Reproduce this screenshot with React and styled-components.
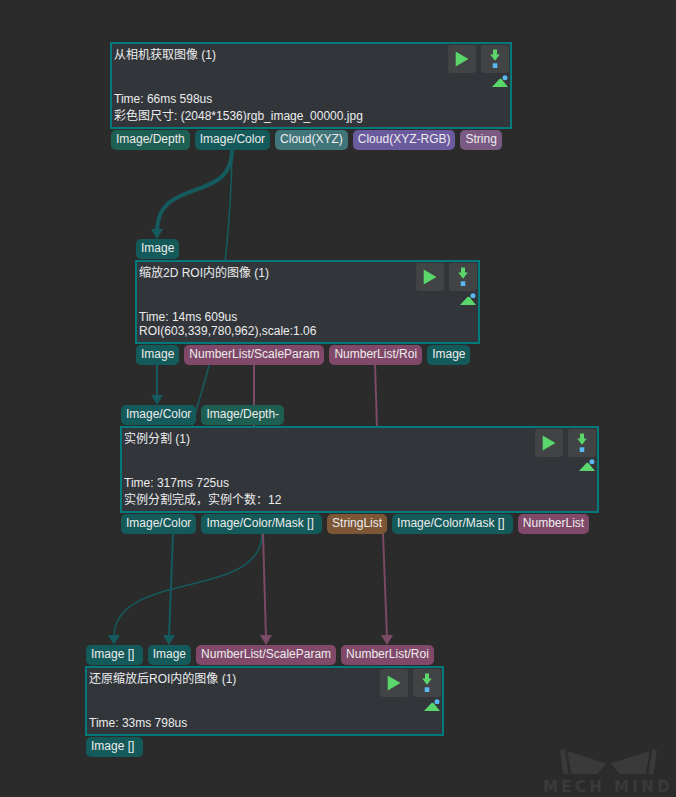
import React from "react";
import styled, { createGlobalStyle } from "styled-components";

const GlobalStyle = createGlobalStyle`
  html, body {
    margin: 0;
    padding: 0;
    background: #2b2b2b;
  }
`;

const portColors = {
  image: "#155a5a",
  depth: "#1d5f52",
  cloud: "#40757a",
  rgb: "#6a5a9e",
  string: "#7a5a82",
  number: "#80496a",
  list: "#7d5636",
};

const Canvas = styled.div`
  position: relative;
  width: 676px;
  height: 797px;
  overflow: hidden;
  background: #2b2b2b;
  font-family: "Liberation Sans", "Noto Sans CJK SC", sans-serif;
  font-size: 12px;
  color: #ececec;
`;

const Edges = styled.svg`
  position: absolute;
  left: 0;
  top: 0;
`;

const NodeWrap = styled.div`
  position: absolute;
  left: ${(p) => p.$x}px;
  top: ${(p) => p.$y}px;
  width: ${(p) => p.$w}px;
  display: flex;
  flex-direction: column;
  gap: 1px;
`;

const PortRow = styled.div`
  display: flex;
  gap: 5px;
  padding-left: 1px;
`;

const Port = styled.div`
  height: 20px;
  line-height: 18px;
  padding: 0 5px;
  border-radius: 5px;
  white-space: pre;
  background: ${(p) => portColors[p.$kind]};
`;

const Box = styled.div`
  box-sizing: border-box;
  height: ${(p) => p.$h}px;
  display: flex;
  justify-content: space-between;
  padding: 1px 1px 4px 2px;
  border: 2px solid #007a7a;
  background: #32363b;
`;

const Info = styled.div`
  display: flex;
  flex-direction: column;
  justify-content: space-between;
  line-height: normal;
  white-space: nowrap;
`;

const Title = styled.div``;

const Status = styled.div``;

const Side = styled.div`
  display: flex;
  flex-direction: column;
  align-items: flex-end;
`;

const Buttons = styled.div`
  display: flex;
  gap: 5px;
`;

const ToolButton = styled.div`
  width: 28px;
  height: 28px;
  border-radius: 3px;
  background: #414345;
`;

const Mini = styled.svg`
  margin-top: 2px;
`;

const Watermark = styled.div`
  position: absolute;
  right: 2px;
  bottom: 4px;
  width: 132px;
  display: flex;
  flex-direction: column;
  align-items: center;
  color: #3a3a3a;
`;

const WatermarkLogo = styled.svg`
  display: block;
`;

const WatermarkText = styled.div`
  font-family: "DejaVu Sans", sans-serif;
  font-weight: 700;
  font-size: 15px;
  line-height: 12px;
  letter-spacing: 3.4px;
  white-space: nowrap;
  margin-top: 6px;
`;

const PlayIcon = () => (
  <svg width="28" height="28" viewBox="0 0 28 28" style={{ display: "block" }}>
    <path d="M7.7 6.5 L20.5 14 L7.7 21.5 Z" fill="#5bd66a" />
  </svg>
);

const StepIcon = () => (
  <svg width="28" height="28" viewBox="0 0 28 28" style={{ display: "block" }}>
    <path
      d="M12 4.5 H16 V9.5 H18.8 L14 15.8 L9.2 9.5 H12 Z"
      fill="#5bd66a"
    />
    <rect x="11.7" y="18.3" width="4.6" height="4.7" fill="#5bb8f0" />
  </svg>
);

const ImageIcon = () => (
  <Mini width="18" height="14" viewBox="0 0 18 14">
    <path d="M1 12 L8.5 4 Q9.5 3.3 10.5 4 L17 12 Z" fill="#5bd66a" />
    <circle cx="14" cy="2.7" r="2.5" fill="#5bb8f0" />
  </Mini>
);

const nodes = [
  {
    x: 110,
    y: 42,
    w: 402,
    h: 87,
    title: "从相机获取图像 (1)",
    lines: ["Time: 66ms 598us", "彩色图尺寸: (2048*1536)rgb_image_00000.jpg"],
    inputs: [],
    outputs: [
      ["Image/Depth", "depth"],
      ["Image/Color", "image"],
      ["Cloud(XYZ)", "cloud"],
      ["Cloud(XYZ-RGB)", "rgb"],
      ["String", "string"],
    ],
  },
  {
    x: 135,
    y: 239,
    w: 345,
    h: 84,
    title: "缩放2D ROI内的图像 (1)",
    lines: ["Time: 14ms 609us", "ROI(603,339,780,962),scale:1.06"],
    inputs: [["Image", "image"]],
    outputs: [
      ["Image", "image"],
      ["NumberList/ScaleParam", "number"],
      ["NumberList/Roi", "number"],
      ["Image", "image"],
    ],
  },
  {
    x: 120,
    y: 405,
    w: 479,
    h: 87,
    title: "实例分割 (1)",
    lines: ["Time: 317ms 725us", "实例分割完成，实例个数：12"],
    inputs: [
      ["Image/Color", "image"],
      ["Image/Depth-", "depth"],
    ],
    outputs: [
      ["Image/Color", "image"],
      ["Image/Color/Mask [] ", "image"],
      ["StringList", "list"],
      ["Image/Color/Mask [] ", "image"],
      ["NumberList", "number"],
    ],
  },
  {
    x: 85,
    y: 645,
    w: 359,
    h: 70,
    title: "还原缩放后ROI内的图像 (1)",
    lines: ["Time: 33ms 798us"],
    inputs: [
      ["Image [] ", "image"],
      ["Image", "image"],
      ["NumberList/ScaleParam", "number"],
      ["NumberList/Roi", "number"],
    ],
    outputs: [["Image [] ", "image"]],
  },
];

const TEAL = "#155a5c";
const PLUM = "#7a4a66";

const edges = [
  { d: "M232 150 C232 205 157 175 157 232", color: TEAL, width: 4 },
  { d: "M232 150 C231 230 222 300 209 365 C203 390 197 405 192 426", color: TEAL, width: 1.6 },
  { d: "M157 365 L157 396", color: TEAL, width: 2 },
  { d: "M254 365 L254 427", color: PLUM, width: 2 },
  { d: "M375 365 L377 427", color: PLUM, width: 2 },
  { d: "M173 534 L169 637", color: TEAL, width: 2 },
  { d: "M262 534 C262 600 114 570 114 637", color: TEAL, width: 1.6 },
  { d: "M263 534 L266 637", color: PLUM, width: 2 },
  { d: "M383 534 L387 637", color: PLUM, width: 2 },
];

// tip x, tip y, half width, colour
const arrows = [
  [157, 239, 6, TEAL],
  [157, 405, 6, TEAL],
  [114, 645, 6, TEAL],
  [169, 645, 6, TEAL],
  [266, 645, 6, PLUM],
  [387, 645, 6, PLUM],
];

const Node = ({ node }) => (
  <NodeWrap $x={node.x} $y={node.y} $w={node.w}>
    {node.inputs.length > 0 && (
      <PortRow>
        {node.inputs.map(([label, kind], i) => (
          <Port key={i} $kind={kind}>
            {label}
          </Port>
        ))}
      </PortRow>
    )}
    <Box $h={node.h}>
      <Info>
        <Title>{node.title}</Title>
        <div>
          {node.lines.map((line) => (
            <Status key={line}>{line}</Status>
          ))}
        </div>
      </Info>
      <Side>
        <Buttons>
          <ToolButton>
            <PlayIcon />
          </ToolButton>
          <ToolButton>
            <StepIcon />
          </ToolButton>
        </Buttons>
        <ImageIcon />
      </Side>
    </Box>
    <PortRow>
      {node.outputs.map(([label, kind], i) => (
        <Port key={i} $kind={kind}>
          {label}
        </Port>
      ))}
    </PortRow>
  </NodeWrap>
);

const App = () => (
  <Canvas>
    <GlobalStyle />
    <Edges width="676" height="797" viewBox="0 0 676 797">
      {edges.map((edge) => (
        <path
          key={edge.d}
          d={edge.d}
          fill="none"
          stroke={edge.color}
          strokeWidth={edge.width}
        />
      ))}
      {arrows.map(([x, y, half, color]) => (
        <path
          key={`${x}-${y}`}
          d={`M${x - half} ${y - 10} H${x + half} L${x} ${y} Z`}
          fill={color}
        />
      ))}
    </Edges>
    {nodes.map((node) => (
      <Node key={node.title} node={node} />
    ))}
    <Watermark>
      <WatermarkLogo width="97" height="26" viewBox="0 0 102 27">
        <path d="M0 1 L5 0 L9 26 L3.5 26 Z" fill="#3a3a3a" />
        <path d="M7.5 2 L49 15 L39 26 L12 26 Z" fill="#3a3a3a" />
        <path d="M94.5 2 L53 15 L63 26 L90 26 Z" fill="#3a3a3a" />
        <path d="M102 1 L97 0 L93 26 L98.5 26 Z" fill="#3a3a3a" />
      </WatermarkLogo>
      <WatermarkText>MECH MIND</WatermarkText>
    </Watermark>
  </Canvas>
);

export default App;
